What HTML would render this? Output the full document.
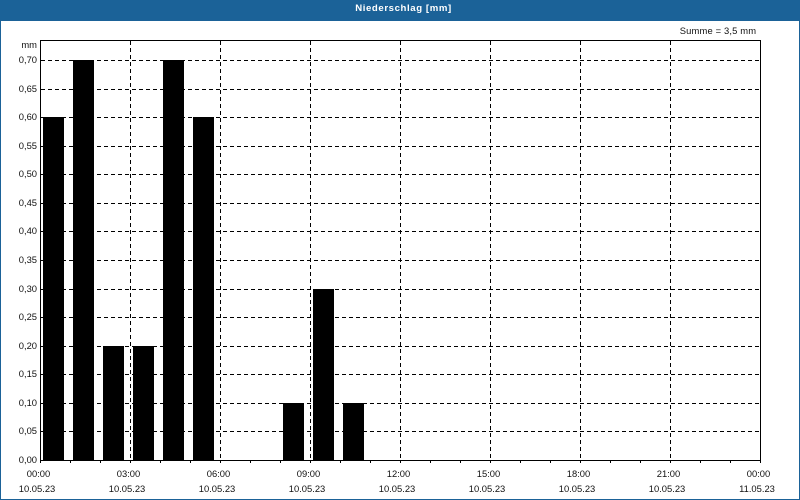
<!DOCTYPE html>
<html><head><meta charset="utf-8"><style>
html,body{margin:0;padding:0;background:#fff}
#c{position:relative;width:800px;height:500px;overflow:hidden;background:#fff}
svg{position:absolute;left:0;top:0}
text{font-family:"Liberation Sans",sans-serif;font-size:9.4px;fill:#111}
</style></head><body><div id="c">
<svg width="800" height="500" viewBox="0 0 800 500" shape-rendering="crispEdges">
<rect x="0" y="0" width="800" height="21" fill="#1b6298"/>
<rect x="0" y="0" width="1" height="500" fill="#1b6298"/>
<rect x="799" y="0" width="1" height="500" fill="#1b6298"/>
<rect x="0" y="499" width="800" height="1" fill="#1b6298"/>
<g stroke="#000" stroke-width="1" stroke-dasharray="4 3" fill="none">
<path d="M41 60.5H759M41 89.5H759M41 117.5H759M41 146.5H759M41 174.5H759M41 203.5H759M41 231.5H759M41 260.5H759M41 289.5H759M41 317.5H759M41 346.5H759M41 374.5H759M41 403.5H759M41 431.5H759"/>
<path d="M130.5 41V460M220.5 41V460M310.5 41V460M400.5 41V460M490.5 41V460M580.5 41V460M670.5 41V460"/>
</g>
<g fill="#000">
<rect x="43" y="117" width="21" height="343"/>
<rect x="73" y="60" width="21" height="400"/>
<rect x="103" y="346" width="21" height="114"/>
<rect x="133" y="346" width="21" height="114"/>
<rect x="163" y="60" width="21" height="400"/>
<rect x="193" y="117" width="21" height="343"/>
<rect x="283" y="403" width="21" height="57"/>
<rect x="313" y="289" width="21" height="171"/>
<rect x="343" y="403" width="21" height="57"/>
</g>
<rect x="40.5" y="40.5" width="720" height="420" fill="none" stroke="#000"/>
<path stroke="#000" d="M40.5 461V463M70.5 461V463M100.5 461V463M130.5 461V463M160.5 461V463M190.5 461V463M220.5 461V463M250.5 461V463M280.5 461V463M310.5 461V463M340.5 461V463M370.5 461V463M400.5 461V463M430.5 461V463M460.5 461V463M490.5 461V463M520.5 461V463M550.5 461V463M580.5 461V463M610.5 461V463M640.5 461V463M670.5 461V463M700.5 461V463M730.5 461V463M760.5 461V463"/>
<g shape-rendering="auto">
<text x="403.5" y="11" text-anchor="middle" style="fill:#fff;font-weight:bold;font-size:9.6px;letter-spacing:.6px">Niederschlag [mm]</text>
<text x="718" y="34" text-anchor="middle" style="letter-spacing:.16px">Summe = 3,5 mm</text>
<g text-anchor="end">
<text x="37" y="48">mm</text>
<text x="37" y="63">0,70</text><text x="37" y="92">0,65</text><text x="37" y="120">0,60</text><text x="37" y="149">0,55</text><text x="37" y="177">0,50</text><text x="37" y="206">0,45</text><text x="37" y="234">0,40</text><text x="37" y="263">0,35</text><text x="37" y="292">0,30</text><text x="37" y="320">0,25</text><text x="37" y="349">0,20</text><text x="37" y="377">0,15</text><text x="37" y="406">0,10</text><text x="37" y="434">0,05</text><text x="37" y="463">0,00</text>
</g>
<g text-anchor="middle">
<text x="38.5" y="477">00:00</text><text x="128.5" y="477">03:00</text><text x="218.5" y="477">06:00</text><text x="308.5" y="477">09:00</text><text x="398.5" y="477">12:00</text><text x="488.5" y="477">15:00</text><text x="578.5" y="477">18:00</text><text x="668.5" y="477">21:00</text><text x="758.5" y="477">00:00</text>
<text x="37" y="492">10.05.23</text><text x="127" y="492">10.05.23</text><text x="217" y="492">10.05.23</text><text x="307" y="492">10.05.23</text><text x="397" y="492">10.05.23</text><text x="487" y="492">10.05.23</text><text x="577" y="492">10.05.23</text><text x="667" y="492">10.05.23</text><text x="757" y="492">11.05.23</text>
</g>
</g>
</svg>
</div></body></html>
